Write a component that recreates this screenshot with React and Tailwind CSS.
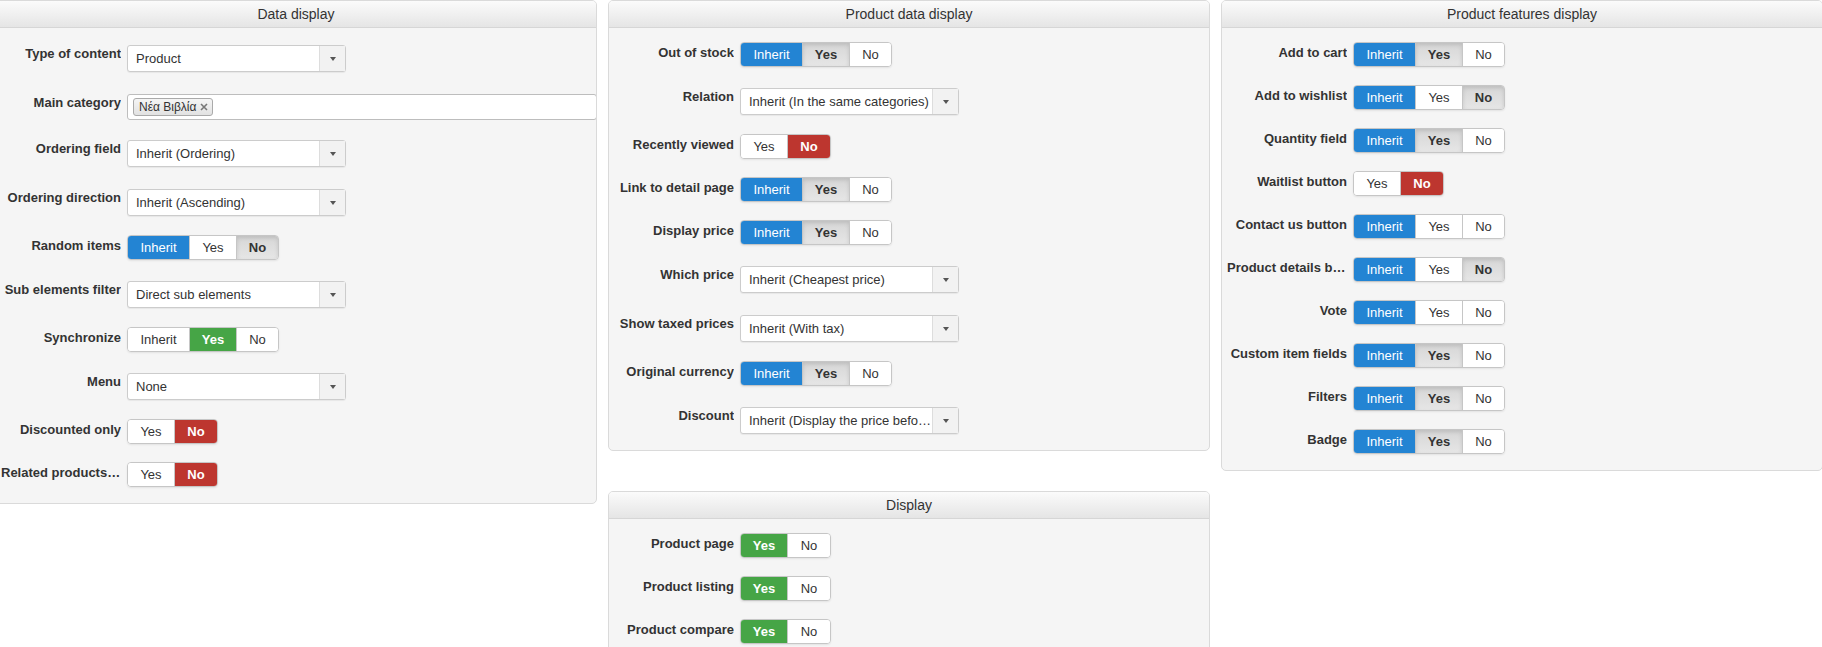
import clsx from 'clsx'

const seg = {
  blue: 'bg-[#2384d3] text-white',
  green: 'bg-[#46a546] text-white font-bold',
  red: 'bg-[#bd362f] text-white font-bold',
  gray: 'bg-gradient-to-b from-[#d6d6d6] to-[#e6e6e6] text-[#333] font-bold shadow-[inset_0_2px_4px_rgba(0,0,0,0.12)]',
  off: 'bg-white text-[#333]'
}

function Toggle({ states }) {
  const three = states.length === 3
  const labels = three ? ['Inherit', 'Yes', 'No'] : ['Yes', 'No']
  const widths = three ? ['w-[61px]', 'w-[47px]', 'w-[42px]'] : ['w-[46px]', 'w-[43px]']
  return (
    <div className="inline-flex h-[25px] overflow-hidden rounded-[4px] border border-[#c6c6c6] shadow-[0_1px_2px_rgba(0,0,0,0.08)]">
      {labels.map((l, i) => (
        <span
          key={l}
          className={clsx(
            'flex items-center justify-center text-[13px]',
            widths[i],
            seg[states[i]],
            i > 0 && 'border-l border-[#c6c6c6]'
          )}
        >
          {l}
        </span>
      ))}
    </div>
  )
}

function Select({ value }) {
  return (
    <div className="flex h-[27px] w-[219px] rounded-[3px] border border-[#cccccc] bg-white shadow-[0_1px_1px_rgba(0,0,0,0.06)]">
      <span className="min-w-0 flex-1 truncate pl-[8px] text-[13px] leading-[25px] text-[#333]">
        {value}
      </span>
      <span className="flex w-[26px] shrink-0 items-center justify-center border-l border-[#dddddd] bg-[#f2f2f2]">
        <span className="h-0 w-0 border-x-[3.5px] border-t-[4px] border-x-transparent border-t-[#555]" />
      </span>
    </div>
  )
}

function MultiSelect({ tag }) {
  return (
    <div className="flex h-[26px] w-[470px] items-center rounded-[3px] border border-[#bdbdbd] bg-white pl-[5px]">
      <span className="flex h-[18px] items-center gap-[4px] rounded-[3px] border border-[#aaaaaa] bg-gradient-to-b from-[#f5f5f5] to-[#e2e2e2] pl-[5px] pr-[4px] text-[12px] text-[#333]">
        {tag}
        <svg width="8" height="8" viewBox="0 0 8 8">
          <path d="M1 1L7 7M7 1L1 7" stroke="#777" strokeWidth="1.6" />
        </svg>
      </span>
    </div>
  )
}

// toggle rows are 43px, select rows 49px with the control pushed down 3px
function Row({ label, kind, children }) {
  return (
    <div
      className={clsx(
        'flex items-start last:h-auto',
        kind === 'toggle' && 'h-[43px]',
        kind === 'select' && 'h-[49px] pt-[3px]',
        kind === 'multi' && 'h-[46px] pt-[3px]'
      )}
    >
      <div
        className={clsx(
          'ml-[5px] w-[120px] shrink-0 truncate text-right text-[13px] font-bold leading-[18px] text-[#333]',
          kind === 'toggle' && 'pt-[2px]'
        )}
      >
        {label}
      </div>
      <div className="ml-[6px]">{children}</div>
    </div>
  )
}

function Panel({ title, children }) {
  return (
    <div className="overflow-hidden rounded-[5px] border border-[#dadada] bg-[#f5f5f5]">
      <div className="h-[27px] border-b border-[#d6d6d6] bg-gradient-to-b from-[#fbfbfb] to-[#e5e5e5] text-center text-[14px] leading-[26px] text-[#333]">
        {title}
      </div>
      <div className="pb-[16px] pt-[14px]">{children}</div>
    </div>
  )
}

function Field({ f }) {
  const kind = f.toggle ? 'toggle' : f.multi ? 'multi' : 'select'
  return (
    <Row label={f.label} kind={kind}>
      {f.toggle && <Toggle states={f.toggle} />}
      {f.select && <Select value={f.select} />}
      {f.multi && <MultiSelect tag={f.multi} />}
    </Row>
  )
}

const dataDisplay = [
  { label: 'Type of content', select: 'Product' },
  { label: 'Main category', multi: 'Νέα Βιβλία' },
  { label: 'Ordering field', select: 'Inherit (Ordering)' },
  { label: 'Ordering direction', select: 'Inherit (Ascending)' },
  { label: 'Random items', toggle: ['blue', 'off', 'gray'] },
  { label: 'Sub elements filter', select: 'Direct sub elements' },
  { label: 'Synchronize', toggle: ['off', 'green', 'off'] },
  { label: 'Menu', select: 'None' },
  { label: 'Discounted only', toggle: ['off', 'red'] },
  { label: 'Related products only', toggle: ['off', 'red'] }
]

const productData = [
  { label: 'Out of stock', toggle: ['blue', 'gray', 'off'] },
  { label: 'Relation', select: 'Inherit (In the same categories)' },
  { label: 'Recently viewed', toggle: ['off', 'red'] },
  { label: 'Link to detail page', toggle: ['blue', 'gray', 'off'] },
  { label: 'Display price', toggle: ['blue', 'gray', 'off'] },
  { label: 'Which price', select: 'Inherit (Cheapest price)' },
  { label: 'Show taxed prices', select: 'Inherit (With tax)' },
  { label: 'Original currency', toggle: ['blue', 'gray', 'off'] },
  { label: 'Discount', select: 'Inherit (Display the price before discount)' }
]

const features = [
  { label: 'Add to cart', toggle: ['blue', 'gray', 'off'] },
  { label: 'Add to wishlist', toggle: ['blue', 'off', 'gray'] },
  { label: 'Quantity field', toggle: ['blue', 'gray', 'off'] },
  { label: 'Waitlist button', toggle: ['off', 'red'] },
  { label: 'Contact us button', toggle: ['blue', 'off', 'off'] },
  { label: 'Product details button', toggle: ['blue', 'off', 'gray'] },
  { label: 'Vote', toggle: ['blue', 'off', 'off'] },
  { label: 'Custom item fields', toggle: ['blue', 'gray', 'off'] },
  { label: 'Filters', toggle: ['blue', 'gray', 'off'] },
  { label: 'Badge', toggle: ['blue', 'gray', 'off'] }
]

const display = [
  { label: 'Product page', toggle: ['green', 'off'] },
  { label: 'Product listing', toggle: ['green', 'off'] },
  { label: 'Product compare', toggle: ['green', 'off'] }
]

export default function App() {
  return (
    <div className="h-[647px] w-full overflow-hidden bg-white font-['Liberation_Sans',Arial,sans-serif]">
      <div className="-ml-[5px] flex items-start gap-[11px]">
        <div className="w-[602px] shrink-0">
          <Panel title="Data display">
            {dataDisplay.map((f) => <Field key={f.label} f={f} />)}
          </Panel>
        </div>
        <div className="flex w-[602px] shrink-0 flex-col gap-[40px]">
          <Panel title="Product data display">
            {productData.map((f) => <Field key={f.label} f={f} />)}
          </Panel>
          <Panel title="Display">
            {display.map((f) => <Field key={f.label} f={f} />)}
          </Panel>
        </div>
        <div className="w-[602px] shrink-0">
          <Panel title="Product features display">
            {features.map((f) => <Field key={f.label} f={f} />)}
          </Panel>
        </div>
      </div>
    </div>
  )
}
